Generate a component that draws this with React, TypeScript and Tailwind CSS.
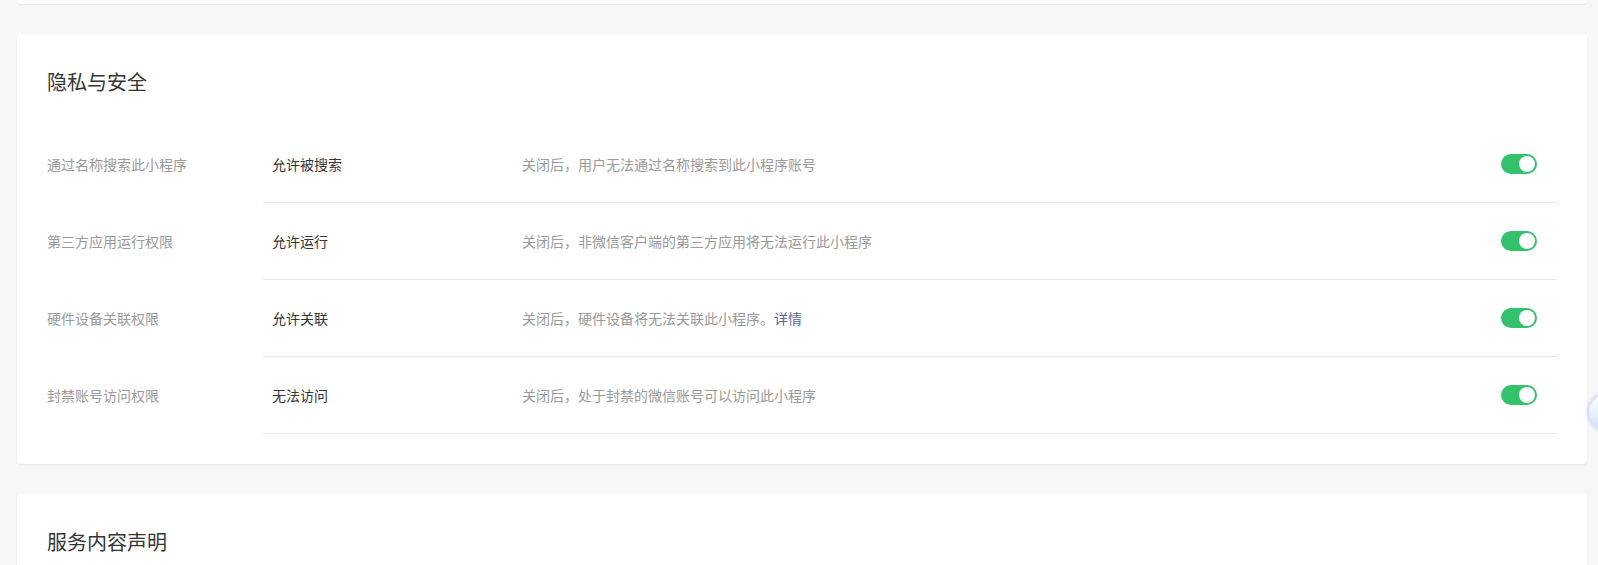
import React from "react";

type Row = { label: string; value: string; desc: string; link?: string };

const ROWS: Row[] = [
  { label: "通过名称搜索此小程序", value: "允许被搜索", desc: "关闭后，用户无法通过名称搜索到此小程序账号" },
  { label: "第三方应用运行权限", value: "允许运行", desc: "关闭后，非微信客户端的第三方应用将无法运行此小程序" },
  { label: "硬件设备关联权限", value: "允许关联", desc: "关闭后，硬件设备将无法关联此小程序。", link: "详情" },
  { label: "封禁账号访问权限", value: "无法访问", desc: "关闭后，处于封禁的微信账号可以访问此小程序" },
];

function Switch() {
  return (
    <span className="relative inline-block h-[20px] w-[36px] rounded-full bg-[#33c26b]">
      <span className="absolute right-[2px] top-[2px] h-[16px] w-[16px] rounded-full bg-white" />
    </span>
  );
}

export default function App() {
  return (
    <div
      className="relative min-h-[565px] overflow-hidden bg-[#f6f7f9] pl-[17px] pr-[11px]"
      style={{ fontFamily: '"Noto Sans CJK SC", "Noto Sans", sans-serif' }}
    >
      <div className="h-[4px] rounded-b-[4px] bg-white shadow-[0_1px_2px_rgba(0,0,0,0.08)]" />

      <div className="mt-[30px] rounded-[4px] bg-white px-[30px] pt-[36px] pb-[30px] shadow-[0_1px_2px_rgba(0,0,0,0.08)]">
        <h2 className="text-[20px] leading-[24px] font-normal text-[#353535]">隐私与安全</h2>
        <div className="mt-[32px]">
          {ROWS.map((r) => (
            <div key={r.label} className="flex h-[77px] items-stretch text-[14px]">
              <div className="flex w-[216px] shrink-0 items-center text-[#9a9a9a]">{r.label}</div>
              <div className="flex flex-1 items-center border-b border-[#e7e7eb] pl-[9px]">
                <div className="w-[250px] shrink-0 text-[#353535]">{r.value}</div>
                <div className="flex-1 text-[#9a9a9a]">
                  {r.desc}
                  {r.link && <a className="text-[#576b95]">{r.link}</a>}
                </div>
                <div className="mr-[20px] flex">
                  <Switch />
                </div>
              </div>
            </div>
          ))}
        </div>
      </div>

      <div className="mt-[30px] rounded-t-[4px] bg-white px-[30px] pt-[36px] pb-[30px] shadow-[0_1px_2px_rgba(0,0,0,0.08)]">
        <h2 className="text-[20px] leading-[24px] font-normal text-[#353535]">服务内容声明</h2>
      </div>

      <div className="absolute right-[-26px] top-[394px] h-[36px] w-[36px] rounded-full border border-[#d3dbf2] bg-gradient-to-b from-white to-[#d6e0fb] shadow-[0_0_4px_rgba(80,110,200,0.4)]" />
    </div>
  );
}
